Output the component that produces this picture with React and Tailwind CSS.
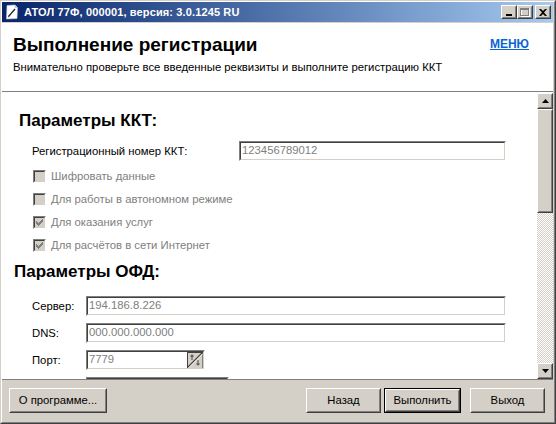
import React from "react";

function Raised({ className = "", children }) {
  return (
    <div className={`border border-t-white border-l-white border-r-[#404040] border-b-[#404040] bg-[#d4d0c8] ${className}`}>
      <div className="w-full h-full border border-t-[#d4d0c8] border-l-[#d4d0c8] border-r-[#808080] border-b-[#808080] flex items-center justify-center">
        {children}
      </div>
    </div>
  );
}

function Field({ className = "", value, children }) {
  return (
    <div className={`h-[20px] border border-t-[#808080] border-l-[#808080] border-r-white border-b-white ${className}`}>
      <div className="w-full h-full border border-t-[#404040] border-l-[#404040] border-r-[#d4d0c8] border-b-[#d4d0c8] bg-white flex items-center pl-[1px] text-[#808080] leading-none">
        <span className="flex-1">{value}</span>
        {children}
      </div>
    </div>
  );
}

function Check({ checked, label }) {
  return (
    <div className="h-[23px] flex items-center pl-[31px]">
      <div className="w-[13px] h-[13px] border border-t-[#808080] border-l-[#808080] border-r-white border-b-white">
        <div className="w-full h-full border border-t-[#404040] border-l-[#404040] border-r-[#d4d0c8] border-b-[#d4d0c8] bg-[#d4d0c8] flex items-center justify-center">
          {checked && (
            <svg width="9" height="9" viewBox="0 0 9 9">
              <path d="M1 3v3h1v1h1v1h1v-1h1v-1h1v-1h1v-1h1v-3h-1v1h-1v1h-1v1h-1v1h-1v-1h-1v-1h-1v-1z" fill="#808080" />
            </svg>
          )}
        </div>
      </div>
      <span className="ml-[5px] text-[#808080]">{label}</span>
    </div>
  );
}

function TriUp() {
  return (
    <svg width="7" height="4" viewBox="0 0 7 4">
      <path d="M3.5 0L7 4H0z" fill="#000" />
    </svg>
  );
}
function TriDown() {
  return (
    <svg width="7" height="4" viewBox="0 0 7 4">
      <path d="M0 0h7L3.5 4z" fill="#000" />
    </svg>
  );
}

export default function App() {
  return (
    <div className="w-[556px] h-[424px] bg-[#d4d0c8] border border-t-[#d4d0c8] border-l-[#d4d0c8] border-r-[#404040] border-b-[#404040] font-['Liberation_Sans',Arial,sans-serif] text-[11.3px] text-black overflow-hidden">
      <div className="h-full flex flex-col border border-t-white border-l-white border-r-[#808080] border-b-[#808080] pr-[1px]">
        {/* Title bar */}
        <div className="h-[20px] shrink-0 flex items-center bg-gradient-to-r from-[#0a246a] to-[#a6caf0] pl-[2px] pr-[2px]">
          <svg width="16" height="16" viewBox="0 0 16 16" className="shrink-0">
            <path d="M3 1.5L11 1l2.5 2.5L13 14.5 2.5 15z" fill="#fff" stroke="#c8d0e0" strokeWidth="0.6" />
            <path d="M11 1l0.2 2.6 2.3-0.1" fill="#dde" stroke="#9aa" strokeWidth="0.6" />
            <path d="M4.5 12.5L11 5" stroke="#223" strokeWidth="1.3" />
            <path d="M4 13.2l1.2-0.3-0.8-0.9z" fill="#223" />
          </svg>
          <span className="ml-[4px] text-white font-bold text-[11px] tracking-[0.13px] leading-none whitespace-nowrap">АТОЛ 77Ф, 000001, версия: 3.0.1245 RU</span>
          <div className="flex-1" />
          <Raised className="w-[16px] h-[14px]">
            <div className="w-[6px] h-[2px] bg-black mt-[6px] mr-[1px]" />
          </Raised>
          <Raised className="w-[16px] h-[14px]">
            <svg width="10" height="9" viewBox="0 0 10 9">
              <rect x="1.5" y="1.5" width="8" height="7" fill="none" stroke="#fff" />
              <rect x="0.5" y="0.5" width="8" height="7" fill="none" stroke="#808080" />
              <rect x="0" y="1" width="9" height="1" fill="#808080" />
            </svg>
          </Raised>
          <Raised className="w-[16px] h-[14px] ml-[2px]">
            <svg width="8" height="7" viewBox="0 0 8 7">
              <path d="M0 0h2l2 2 2-2h2l-3 3.5 3 3.5h-2l-2-2-2 2h-2l3-3.5z" fill="#000" />
            </svg>
          </Raised>
        </div>
        <div className="h-[1px] shrink-0" />

        {/* Header */}
        <div className="h-[69px] shrink-0 bg-white border-b border-[#808080] flex flex-col pl-[11px] pr-[24px]">
          <div className="flex items-end justify-between mt-[11px]">
            <span className="text-[19px] leading-[22px] font-bold">Выполнение регистрации</span>
            <span className="text-[12px] leading-[16px] font-bold text-[#0a64d2] underline mb-[4px]">МЕНЮ</span>
          </div>
          <div className="mt-[4px] leading-[14px]">Внимательно проверьте все введенные реквизиты и выполните регистрацию ККТ</div>
        </div>

        {/* Scroll panel */}
        <div className="flex-1 min-h-0 flex bg-white border-b border-[#808080]">
          <div className="flex-1 min-w-0 overflow-hidden flex flex-col">
            <div className="pt-[19px] pl-[17px] text-[17px] leading-[20px] font-bold">Параметры ККТ:</div>
            <div className="mt-[10px] flex items-center h-[20px] shrink-0">
              <span className="pl-[30px] w-[237px]">Регистрационный номер ККТ:</span>
              <Field className="w-[267px]" value="123456789012" />
            </div>
            <div className="mt-[4px]">
              <Check label="Шифровать данные" />
              <Check label="Для работы в автономном режиме" />
              <Check checked label="Для оказания услуг" />
              <Check checked label="Для расчётов в сети Интернет" />
            </div>
            <div className="mt-[5px] pl-[12px] text-[17px] leading-[20px] font-bold">Параметры ОФД:</div>
            <div className="mt-[14px] flex flex-col gap-[7px]">
              <div className="flex items-center h-[20px] shrink-0">
                <span className="pl-[30px] w-[84px]">Сервер:</span>
                <Field className="w-[420px]" value="194.186.8.226" />
              </div>
              <div className="flex items-center h-[20px] shrink-0">
                <span className="pl-[30px] w-[84px]">DNS:</span>
                <Field className="w-[420px]" value="000.000.000.000" />
              </div>
              <div className="flex items-center h-[20px] shrink-0">
                <span className="pl-[30px] w-[84px]">Порт:</span>
                <Field className="w-[119px]" value="7779">
                  <svg width="16" height="16" viewBox="0 0 16 16" className="shrink-0">
                    <rect x="0" y="0" width="16" height="16" fill="#d4d0c8" />
                    <path d="M0 0.5h15.5v15.5" fill="none" stroke="#808080" />
                    <path d="M0.5 16V0.5H16" fill="none" stroke="#404040" />
                    <path d="M1 15L15 1" stroke="#404040" strokeWidth="1.2" />
                    <path d="M2 15.5L15.5 2" stroke="#fff" strokeWidth="0.8" />
                    <path d="M5 3v5M3.5 4.5L5 3l1.5 1.5" fill="none" stroke="#606060" strokeWidth="1.2" />
                    <path d="M11 8v5M9.5 11.5L11 13l1.5-1.5" fill="none" stroke="#606060" strokeWidth="1.2" />
                  </svg>
                </Field>
              </div>
              <div className="flex items-center h-[20px] shrink-0">
                <span className="w-[84px]" />
                <Field className="w-[143px]" value="" />
              </div>
            </div>
          </div>
          {/* Scrollbar */}
          <div className="w-[16px] shrink-0 mt-[1px] flex flex-col">
            <Raised className="w-[16px] h-[16px] shrink-0">
              <TriUp />
            </Raised>
            <Raised className="w-[16px] h-[104px] shrink-0" />
            <div className="flex-1 bg-[repeating-conic-gradient(#d4d0c8_0_25%,#ffffff_0_50%)] bg-[length:2px_2px]" />
            <Raised className="w-[16px] h-[16px] shrink-0">
              <TriDown />
            </Raised>
          </div>
        </div>

        {/* Footer */}
        <div className="h-[42px] shrink-0 flex items-start pt-[8px] pl-[7px] pr-[8px]">
          <Raised className="w-[98px] h-[25px]">
            <span className="whitespace-nowrap">О программе...</span>
          </Raised>
          <div className="flex-1" />
          <Raised className="w-[75px] h-[25px]">
            <span>Назад</span>
          </Raised>
          <div className="ml-[3px] border border-black">
            <Raised className="w-[75px] h-[23px]">
              <span>Выполнить</span>
            </Raised>
          </div>
          <Raised className="w-[75px] h-[25px] ml-[9px]">
            <span>Выход</span>
          </Raised>
        </div>
      </div>
    </div>
  );
}
